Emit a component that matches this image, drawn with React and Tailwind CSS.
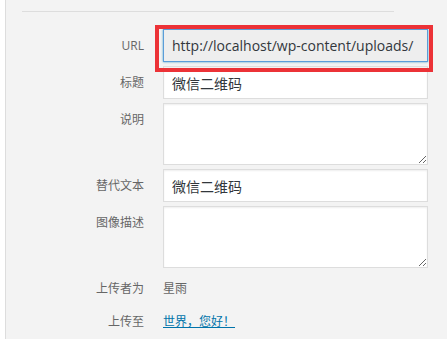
const labelCls = 'w-[122px] shrink-0 text-right text-[12px] text-[#666]'
const fieldBase = 'w-[265px] border px-[8px] text-[14px] text-[#32373c] outline-none'
const inputCls = `${fieldBase} h-[33px] border-[#ddd] bg-white shadow-[inset_0_1px_2px_rgba(0,0,0,0.07)]`
const urlCls = `${fieldBase} h-[33px] border-[#5b9dd9] bg-[#eee] text-[#555] shadow-[0_0_2px_rgba(30,140,190,0.8)]`
const areaCls = `${fieldBase} block h-[62px] py-[4px] border-[#ddd] bg-white shadow-[inset_0_1px_2px_rgba(0,0,0,0.07)]`

function Row({ label, top, children }) {
  return (
    <div className={`flex gap-[19px] ${top ? 'items-start' : 'items-center'}`}>
      <label className={`${labelCls} ${top ? 'pt-[8px]' : ''}`}>{label}</label>
      {children}
    </div>
  )
}

export default function App() {
  return (
    <div
      className="w-[447px] h-[339px] overflow-hidden bg-white pl-[5px]"
      style={{ fontFamily: '"Open Sans", "Noto Sans CJK SC", sans-serif' }}
    >
      <div className="h-full border-l border-[#ddd] bg-[#f3f3f3] pl-[16px] pt-[11px]">
        <div className="w-[372px] border-t border-[#ddd]" />
        <div className="mt-[17px] flex flex-col gap-[4px]">
          <Row label="URL">
            <div className="relative">
              <input readOnly value="http://localhost/wp-content/uploads/" className={`${urlCls} pr-[2px]`} />
              <div className="pointer-events-none absolute -left-[8px] -right-[5px] -top-[4px] -bottom-[10px] border-[4px] border-[#ec3237]" />
            </div>
          </Row>
          <Row label="标题">
            <input readOnly value="微信二维码" className={inputCls} />
          </Row>
          <Row label="说明" top>
            <textarea readOnly className={areaCls} />
          </Row>
          <Row label="替代文本">
            <input readOnly value="微信二维码" className={inputCls} />
          </Row>
          <Row label="图像描述" top>
            <textarea readOnly className={areaCls} />
          </Row>
        </div>
        <div className="mt-[12px] flex flex-col gap-[15px]">
          <Row label="上传者为">
            <span className="text-[12px] text-[#666]">星雨</span>
          </Row>
          <Row label="上传至">
            <a href="#" className="text-[12px] text-[#0073aa] underline">世界，您好！</a>
          </Row>
        </div>
      </div>
    </div>
  )
}
